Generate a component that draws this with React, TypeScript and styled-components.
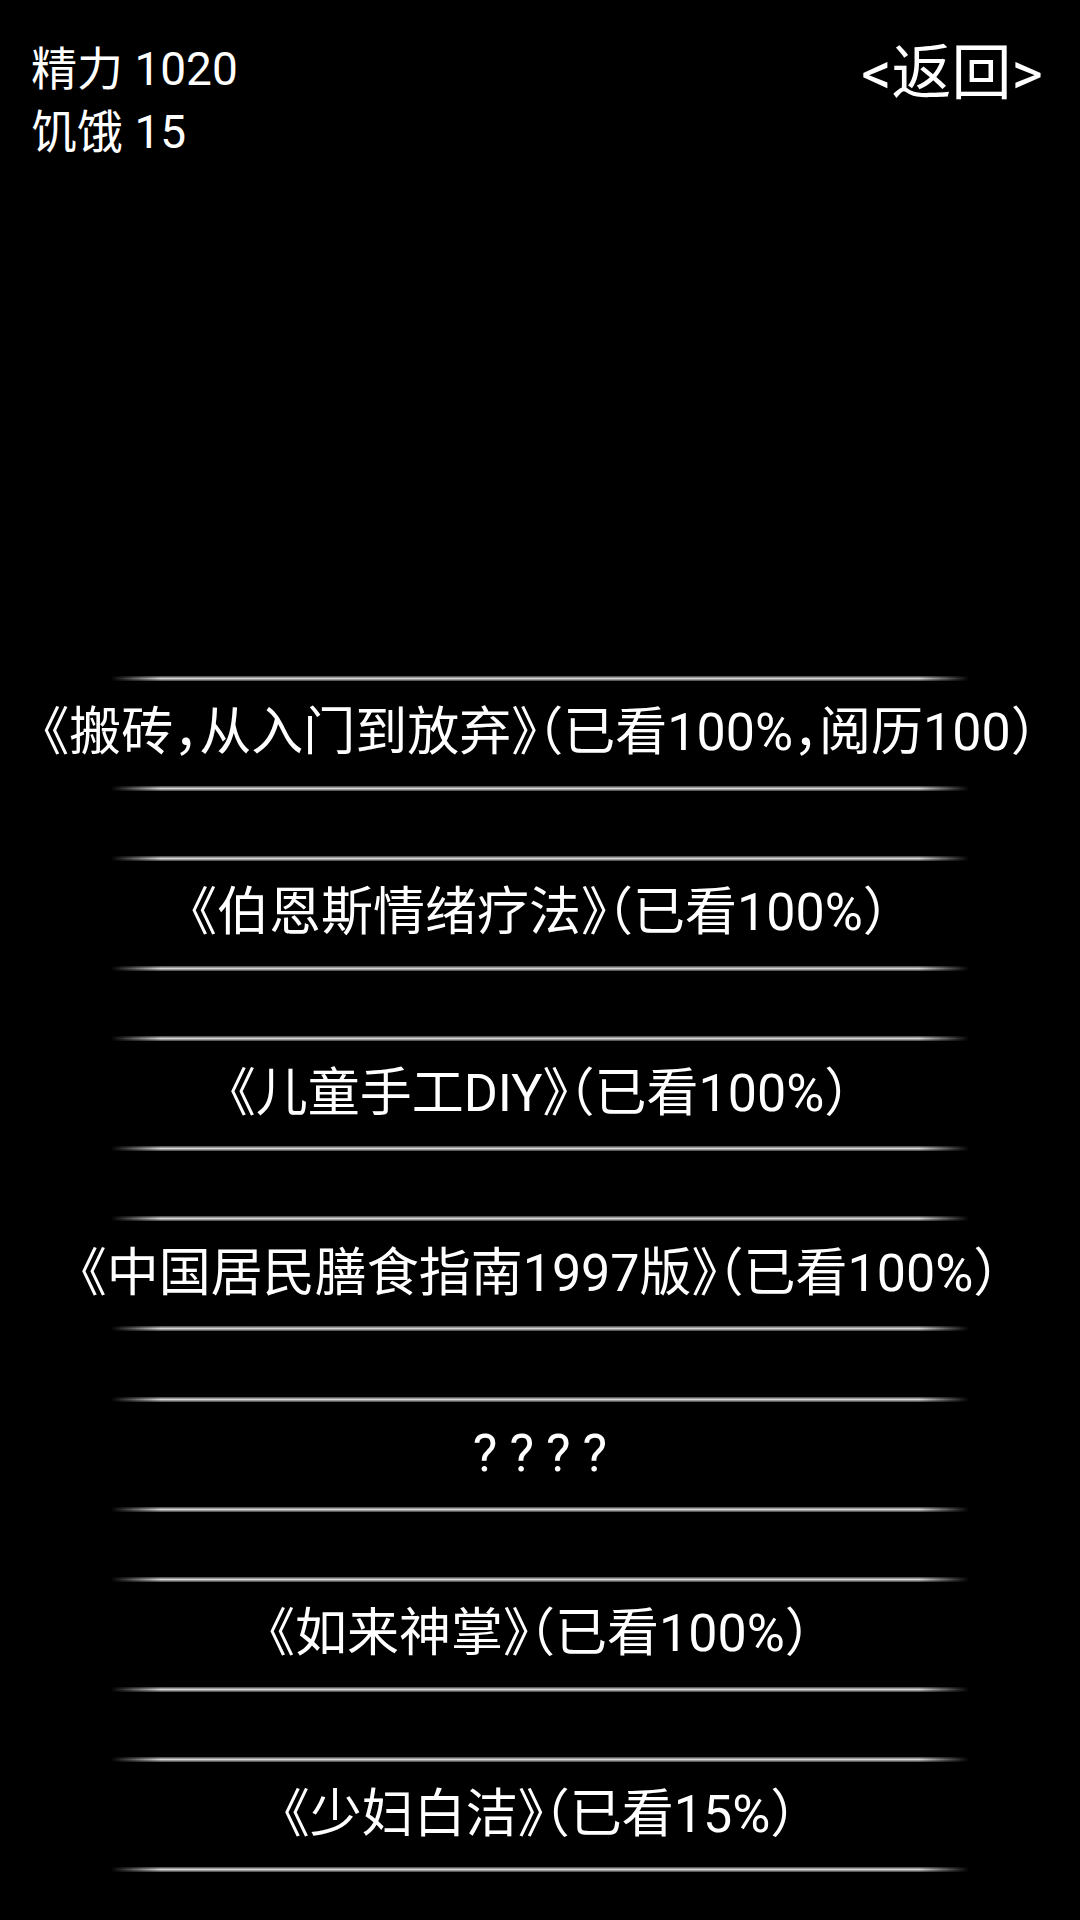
import React from "react";
import styled, { createGlobalStyle } from "styled-components";

const GlobalStyle = createGlobalStyle`
  html, body {
    margin: 0;
    padding: 0;
    background: #000000;
  }
  body {
    font-family: Roboto, "Noto Sans CJK SC", sans-serif;
    color: #ffffff;
  }
`;

const Screen = styled.div`
  width: 1080px;
  height: 1920px;
  background: #000000;
  display: flex;
  flex-direction: column;
  overflow: hidden;
`;

const Header = styled.div`
  display: flex;
  justify-content: space-between;
  align-items: flex-start;
  padding: 38px 37px 0 31px;
`;

const Stats = styled.div`
  display: flex;
  flex-direction: column;
  font-size: 46px;
  line-height: 63px;
`;

const BackButton = styled.button`
  background: none;
  border: 0;
  padding: 0;
  margin: 0;
  color: #ffffff;
  font-family: inherit;
  font-size: 60px;
  line-height: 72px;
  cursor: pointer;
`;

const BookList = styled.div`
  display: flex;
  flex-direction: column;
  gap: 65.3px;
  padding-top: 511.5px;
`;

const BookItem = styled.div`
  display: flex;
  flex-direction: column;
`;

const Rule = styled.div`
  width: 858px;
  height: 5px;
  margin: 0 auto;
  background: linear-gradient(
    to bottom,
    rgba(110, 110, 110, 0.55),
    #d6d6d6 50%,
    rgba(110, 110, 110, 0.55)
  );
  -webkit-mask-image: linear-gradient(to right, transparent, #000 50px, #000 calc(100% - 50px), transparent);
  mask-image: linear-gradient(to right, transparent, #000 50px, #000 calc(100% - 50px), transparent);
`;

const Title = styled.div<{ $spacing?: number }>`
  height: 105px;
  display: flex;
  align-items: center;
  justify-content: center;
  font-size: 52px;
  line-height: 1;
  white-space: nowrap;
  font-feature-settings: "halt" 1;
  letter-spacing: ${(p) => (p.$spacing ? `${p.$spacing}px` : "normal")};
  padding-left: ${(p) => (p.$spacing ? `${p.$spacing}px` : "0")};
`;

const books = [
  { title: "《搬砖，从入门到放弃》（已看100%，阅历100）" },
  { title: "《伯恩斯情绪疗法》（已看100%）" },
  { title: "《儿童手工DIY》（已看100%）" },
  { title: "《中国居民膳食指南1997版》（已看100%）" },
  { title: "????", spacing: 12 },
  { title: "《如来神掌》（已看100%）" },
  { title: "《少妇白洁》（已看15%）" },
];

const App = () => {
  return (
    <Screen>
      <GlobalStyle />
      <Header>
        <Stats>
          <span>精力 1020</span>
          <span>饥饿 15</span>
        </Stats>
        <BackButton>&lt;返回&gt;</BackButton>
      </Header>
      <BookList>
        {books.map((b, i) => (
          <BookItem key={i}>
            <Rule />
            <Title $spacing={b.spacing}>{b.title}</Title>
            <Rule />
          </BookItem>
        ))}
      </BookList>
    </Screen>
  );
};

export default App;
